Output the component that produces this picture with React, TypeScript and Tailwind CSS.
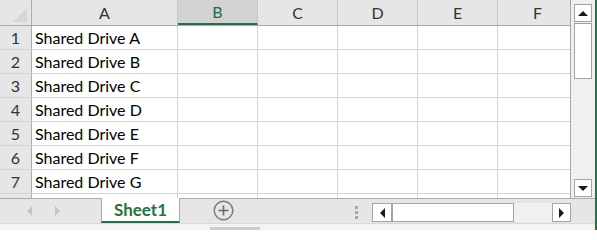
import React from "react";

const FONT = { fontFamily: "Lato, 'Liberation Sans', sans-serif" };

const columns = [
  { key: "A", width: "w-[146px]" },
  { key: "B", width: "w-[80px]", selected: true },
  { key: "C", width: "w-[80px]" },
  { key: "D", width: "w-[80px]" },
  { key: "E", width: "w-[80px]" },
  { key: "F", width: "w-[80px]" },
];

// last row is only a sliver under the tab bar, so it shows no label
const rows = [
  "Shared Drive A",
  "Shared Drive B",
  "Shared Drive C",
  "Shared Drive D",
  "Shared Drive E",
  "Shared Drive F",
  "Shared Drive G",
  null,
];

function Tri({ dir, className }: { dir: "up" | "down" | "left" | "right"; className?: string }) {
  const pts = {
    up: "0,5 5,0 10,5",
    down: "0,0 10,0 5,5",
    left: "5,0 5,10 0,5",
    right: "0,0 0,10 5,5",
  }[dir];
  const vertical = dir === "up" || dir === "down";
  return (
    <svg
      width={vertical ? 10 : 5}
      height={vertical ? 5 : 10}
      viewBox={vertical ? "0 0 10 5" : "0 0 5 10"}
      className={className}
    >
      <polygon points={pts} fill="currentColor" />
    </svg>
  );
}

function ScrollButton({ dir, className }: { dir: "up" | "down" | "left" | "right"; className?: string }) {
  return (
    <div
      className={`flex items-center justify-center border border-[#a3a3a3] bg-white text-[#1a1a1a] ${className ?? ""}`}
    >
      <Tri dir={dir} />
    </div>
  );
}

function Grid() {
  return (
    <div className="w-[571px] h-[198px] overflow-hidden bg-white border-r border-[#a6a6a6]">
      <div className="flex h-[26px] bg-[#e6e6e6] border-b border-[#ababab]">
        <div className="w-[32px] shrink-0 border-r border-[#ababab] relative">
          <svg width="32" height="25" className="absolute left-0 top-0">
            <polygon points="27,8 27,22 13,22" fill="#d6d6d6" />
          </svg>
        </div>
        {columns.map((c) => (
          <div
            key={c.key}
            className={`${c.width} shrink-0 flex items-center justify-center text-[16px] border-r border-[#c6c6c6] ${
              c.selected
                ? "bg-[#d2d2d2] text-[#1e6b41] border-b-2 border-b-[#217346]"
                : "text-[#333]"
            }`}
          >
            {c.key}
          </div>
        ))}
      </div>
      {rows.map((label, i) => (
        <div key={i} className="flex h-[24px] border-b border-[#d4d4d4]">
          <div className="w-[32px] shrink-0 bg-[#e6e6e6] border-r border-[#ababab] flex items-center justify-center text-[16px] text-[#333] pt-[1px]">
            {label !== null ? i + 1 : ""}
          </div>
          {columns.map((c, j) => (
            <div
              key={c.key}
              className={`${c.width} shrink-0 border-r border-[#d4d4d4] flex items-center pl-[3px] pt-[1px] text-[16px] text-black whitespace-nowrap`}
            >
              {j === 0 ? label : ""}
            </div>
          ))}
        </div>
      ))}
    </div>
  );
}

function VScroll() {
  return (
    <div className="w-[24px] h-[198px] bg-[#f0f0f0] flex flex-col pl-[3px] pr-[3px] pt-[4px]">
      <ScrollButton dir="up" className="h-[18px] w-[18px]" />
      <div className="h-[56px] w-[18px] mt-[1px] border border-[#a3a3a3] bg-white" />
      <div className="flex-1" />
      <ScrollButton dir="down" className="h-[18px] w-[18px] mb-[1px]" />
    </div>
  );
}

function TabBar() {
  return (
    <div className="h-[25px] flex bg-[#e6e6e6] border-t border-[#ababab]">
      <div className="w-[101px] flex items-center pl-[27px] gap-[23px] text-[#c3c3c3]">
        <Tri dir="left" />
        <Tri dir="right" />
      </div>
      <div className="w-[79px] -mt-[1px] h-[25px] bg-white border-x border-[#ababab] border-b-2 border-b-[#217346] flex items-center justify-center text-[17px] font-bold text-[#217346]">
        Sheet1
      </div>
      <div className="w-[33px]" />
      <svg width="21" height="21" viewBox="0 0 21 21" className="mt-[1px]">
        <circle cx="10.5" cy="10.5" r="9.3" fill="none" stroke="#7a7a7a" strokeWidth="1.5" />
        <path d="M10.5 5.5v10M5.5 10.5h10" stroke="#6a6a6a" strokeWidth="1.6" />
      </svg>
      <div className="w-[121px]" />
      <div className="flex flex-col gap-[2px] pt-[7px]">
        <div className="w-[3px] h-[3px] bg-[#a8a8a8]" />
        <div className="w-[3px] h-[3px] bg-[#a8a8a8]" />
        <div className="w-[3px] h-[3px] bg-[#a8a8a8]" />
      </div>
      <div className="w-[14px]" />
      <div className="flex h-[19px] mt-[4px] w-[199px] bg-[#f0f0f0]">
        <ScrollButton dir="left" className="w-[20px] h-[19px]" />
        <div className="w-[122px] h-[19px] border border-[#a3a3a3] bg-white" />
        <div className="flex-1" />
        <ScrollButton dir="right" className="w-[19px] h-[19px]" />
      </div>
    </div>
  );
}

export default function App() {
  return (
    <div className="w-[597px] h-[230px] flex overflow-hidden bg-white select-none" style={FONT}>
      <div className="w-[595px] flex flex-col">
        <div className="flex">
          <Grid />
          <VScroll />
        </div>
        <TabBar />
        <div className="flex-1 border-t border-[#d9d9d9] bg-[#f3f3f3] relative">
          <div className="absolute left-[210px] bottom-0 h-[3px] w-[50px] bg-[#cdcdcd]" />
        </div>
      </div>
      <div className="w-[2px] bg-[#217346]" />
    </div>
  );
}
